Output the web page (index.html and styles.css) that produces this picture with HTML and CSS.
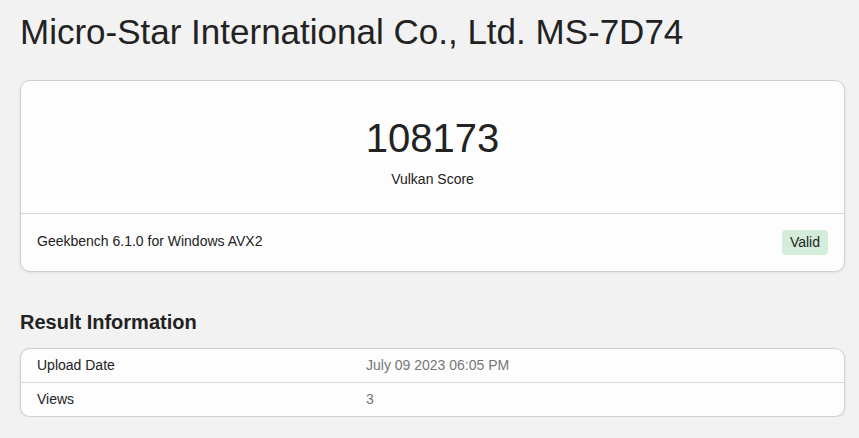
FILE: index.html
```html
<!DOCTYPE html>
<html>
<head>
<meta charset="utf-8">
<link rel="stylesheet" href="styles.css">
</head>
<body>
<div class="page">
  <h1 class="title">Micro-Star International Co., Ltd. MS-7D74</h1>
  <div class="card score-card">
    <div class="score-body">
      <div class="score">108173</div>
      <div class="score-label">Vulkan Score</div>
    </div>
    <div class="score-footer">
      <span class="platform">Geekbench 6.1.0 for Windows AVX2</span>
      <span class="badge">Valid</span>
    </div>
  </div>
  <h2 class="section">Result Information</h2>
  <div class="card info">
    <div class="row"><div class="name">Upload Date</div><div class="value">July 09 2023 06:05 PM</div></div>
    <div class="row"><div class="name">Views</div><div class="value">3</div></div>
  </div>
</div>
</body>
</html>
```
FILE: styles.css
```css
html, body {
  margin: 0;
  padding: 0;
  background: #f2f2f2;
  font-family: "Liberation Sans", Arial, sans-serif;
  color: #212529;
}
.page {
  padding: 0 14px 0 20px;
}
.title {
  margin: 0;
  padding-top: 11px;
  font-size: 35px;
  font-weight: 400;
  line-height: 42px;
  color: #222;
}
.card {
  background: #fdfdfd;
  border: 1px solid #cfcfcf;
  border-radius: 10px;
  box-shadow: 0 1px 3px rgba(0,0,0,0.08);
}
.score-card {
  margin-top: 27px;
}
.score-body {
  height: 132px;
  border-bottom: 1px solid #d6d6d6;
  display: flex;
  flex-direction: column;
  align-items: center;
}
.score {
  margin-top: 35px;
  font-size: 40px;
  line-height: 45px;
  color: #222;
}
.score-label {
  margin-top: 9px;
  font-size: 14px;
  line-height: 18px;
  color: #222;
}
.score-footer {
  display: flex;
  justify-content: space-between;
  align-items: center;
  padding: 16px;
  font-size: 14px;
  color: #222;
}
.platform {
  margin-top: -3px;
}
.badge {
  background: #d4eddb;
  border-radius: 4px;
  padding: 0 8px;
  height: 25px;
  line-height: 24px;
  font-size: 14px;
  color: #222;
}
.section {
  margin: 38px 0 0 0;
  font-size: 20px;
  font-weight: 700;
  line-height: 24px;
  color: #222;
}
.info {
  margin-top: 14px;
}
.row {
  display: grid;
  grid-template-columns: 329px 1fr;
  padding: 0 16px;
  height: 33px;
  align-items: center;
  font-size: 14px;
  line-height: 16px;
}
.row > div {
  margin-top: -2px;
}
.row + .row {
  border-top: 1px solid #d9d9d9;
}
.name { color: #222; }
.value { color: #777; }
```
